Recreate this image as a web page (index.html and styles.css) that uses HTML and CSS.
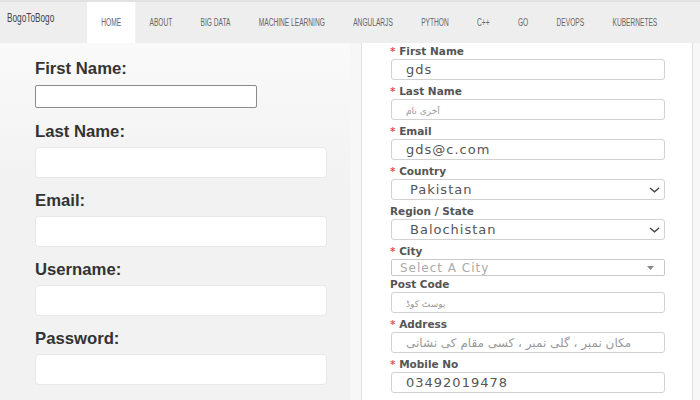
FILE: index.html
```html
<!DOCTYPE html>
<html lang="en">
<head>
<meta charset="utf-8">
<title>BogoToBogo</title>
<link rel="stylesheet" href="styles.css">
</head>
<body>
<nav class="topnav">
  <div class="nav-inner">
    <span class="brand">BogoToBogo</span>
    <ul class="menu">
      <li class="active">HOME</li>
      <li>ABOUT</li>
      <li>BIG DATA</li>
      <li>MACHINE LEARNING</li>
      <li>ANGULARJS</li>
      <li>PYTHON</li>
      <li>C++</li>
      <li>GO</li>
      <li>DEVOPS</li>
      <li>KUBERNETES</li>
    </ul>
  </div>
</nav>
<main class="main">
  <section class="left">
    <label class="llabel">First Name:</label>
    <input class="plain" type="text">
    <label class="llabel">Last Name:</label>
    <input class="wide" type="text">
    <label class="llabel">Email:</label>
    <input class="wide" type="text">
    <label class="llabel">Username:</label>
    <input class="wide" type="text">
    <label class="llabel">Password:</label>
    <input class="wide" type="password">
  </section>
  <section class="right-wrap">
    <div class="panel">
      <div class="rlabel"><span class="req">*</span> First Name</div>
      <input class="rinput" type="text" value="gds">
      <div class="rlabel"><span class="req">*</span> Last Name</div>
      <input class="rinput short-ph" type="text" placeholder="آخری نام">
      <div class="rlabel"><span class="req">*</span> Email</div>
      <input class="rinput" type="text" value="gds@c.com">
      <div class="rlabel"><span class="req">*</span> Country</div>
      <div class="rselect"><span>Pakistan</span>
        <svg class="chev" width="11" height="6" viewBox="0 0 11 6"><path d="M1 1 L5.5 4.8 L10 1" fill="none" stroke="#444" stroke-width="1.4"/></svg>
      </div>
      <div class="rlabel">Region / State</div>
      <div class="rselect"><span>Balochistan</span>
        <svg class="chev" width="11" height="6" viewBox="0 0 11 6"><path d="M1 1 L5.5 4.8 L10 1" fill="none" stroke="#444" stroke-width="1.4"/></svg>
      </div>
      <div class="rlabel"><span class="req">*</span> City</div>
      <div class="cselect"><span>Select A City</span>
        <svg class="caret" width="7" height="4" viewBox="0 0 7 4"><path d="M0 0 H7 L3.5 4 Z" fill="#888"/></svg>
      </div>
      <div class="rlabel">Post Code</div>
      <input class="rinput short-ph" type="text" placeholder="پوسٹ کوڈ">
      <div class="rlabel"><span class="req">*</span> Address</div>
      <input class="rinput long-ph" type="text" placeholder="مکان نمبر ، گلی نمبر ، کسی مقام کی نشانی">
      <div class="rlabel"><span class="req">*</span> Mobile No</div>
      <input class="rinput" type="text" value="03492019478">
    </div>
  </section>
</main>
</body>
</html>
```

FILE: styles.css
```css
* { box-sizing: border-box; }

html, body {
  margin: 0;
  padding: 0;
  background: #f7f7f7;
  height: 400px;
  overflow: hidden;
}

.topnav {
  height: 43px;
  background: #eeeeee;
  border-top: 2px solid #e2e2e2;
  overflow: hidden;
}

.nav-inner {
  display: flex;
  width: 1060px;
  height: 41px;
  transform: scaleX(0.66);
  transform-origin: 0 0;
  font-family: "Liberation Sans", Arial, sans-serif;
}

.brand {
  width: 132px;
  padding: 9px 0 0 10.6px;
  font-size: 12.5px;
  line-height: 14px;
  color: #444;
  flex-shrink: 0;
}

.menu {
  display: flex;
  list-style: none;
  margin: 0;
  padding: 0;
}

.menu li {
  padding: 1px 21.5px 0;
  line-height: 40px;
  font-size: 10px;
  color: #666;
  white-space: nowrap;
}

.menu li.active {
  background: #ffffff;
}

.main {
  display: flex;
  height: 357px;
}

.left {
  width: 350px;
  flex-shrink: 0;
  padding: 16px 0 0 35px;
  background: linear-gradient(#fafafa, #f2f2f2 140px);
  display: flex;
  flex-direction: column;
  align-items: flex-start;
}

.llabel {
  display: block;
  font-family: "Liberation Sans", Arial, sans-serif;
  font-weight: bold;
  font-size: 16.7px;
  line-height: 20px;
  color: #333;
  margin-bottom: 5px;
}

.plain {
  width: 222px;
  height: 23px;
  border: 1px solid #8a8a8a;
  border-radius: 2px;
  background: #fff;
  margin: 1px 0 14px;
  padding: 0 4px;
}

.wide {
  width: 292px;
  height: 31px;
  border: 1px solid #e8e8e8;
  border-radius: 4px;
  background: #fff;
  margin: 0 0 13px;
  padding: 0 8px;
}

.right-wrap {
  flex: 1;
  padding-left: 11px;
  background: #f7f7f7;
}

.panel {
  width: 332px;
  height: 100%;
  background: #fff;
  border-left: 1px solid #e0e0e0;
  border-right: 1px solid #e0e0e0;
  padding: 1px 0 0 28px;
  display: flex;
  flex-direction: column;
  align-items: flex-start;
}

.rlabel {
  font-family: "DejaVu Sans", Verdana, sans-serif;
  font-weight: bold;
  font-size: 10.5px;
  line-height: 14px;
  color: #555;
  margin-bottom: 1px;
}

.req {
  color: #e05a5a;
}

.rinput {
  width: 274px;
  height: 21px;
  margin: 0 0 4px 1px;
  border: 1px solid #d2d2d2;
  border-radius: 3px;
  background: #fff;
  padding: 0 0 0 14px;
  font-family: "DejaVu Sans", Verdana, sans-serif;
  font-size: 13px;
  letter-spacing: 1px;
  color: #555;
}

.rinput::placeholder {
  color: #9a9a9a;
  font-size: 10px;
  letter-spacing: 0;
}

.rinput.short-ph::placeholder {
  font-size: 9px;
}

.rinput.long-ph::placeholder {
  font-size: 12px;
}

.rselect {
  width: 274px;
  height: 21px;
  margin: 0 0 4px 1px;
  border: 1px solid #d2d2d2;
  border-radius: 3px;
  background: #fff;
  padding: 0 4px 0 18px;
  display: flex;
  align-items: center;
  justify-content: space-between;
  font-family: "DejaVu Sans", Verdana, sans-serif;
  font-size: 13px;
  letter-spacing: 1px;
  color: #555;
}

.cselect {
  width: 274px;
  height: 17px;
  margin: 0 0 1px 1px;
  border: 1px solid #c8c8c8;
  border-radius: 2px;
  background: #fff;
  padding: 0 10px 0 8px;
  display: flex;
  align-items: center;
  justify-content: space-between;
  font-family: "DejaVu Sans", Verdana, sans-serif;
  font-size: 12px;
  letter-spacing: 1px;
  color: #aaa;
}
```
